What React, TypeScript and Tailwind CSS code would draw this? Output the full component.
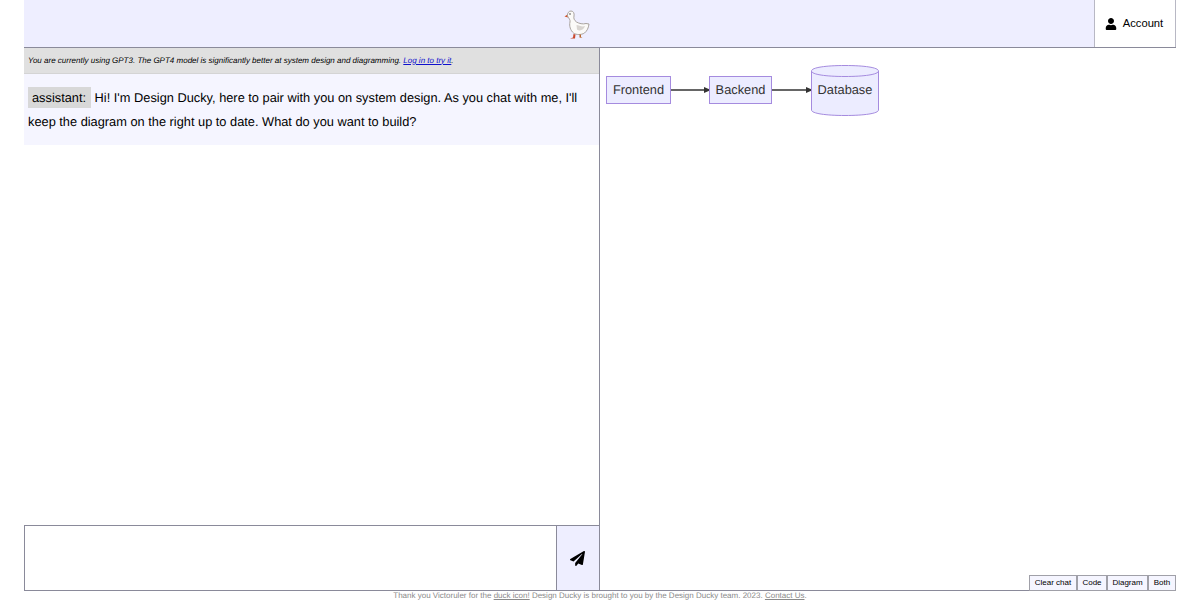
import { FaPaperPlane, FaUser } from 'react-icons/fa';

function DuckLogo() {
  return (
    <svg width="26" height="30" viewBox="0 0 26 30" aria-label="Design Ducky">
      <path d="M3.5 4.5 L0.5 6.5 L4 7.5 Z" fill="#d2552a" />
      <path
        d="M3.5 6 C3 3 5 1 7 1 C9.5 1 10.5 3.5 10 6 C9.5 8.5 10 10 12.5 12 C15 13.5 19 14.5 22 13.5 L25 14 C24.5 18 23 21 20.5 23 C17.5 25 12 25 9.5 23 C6.5 20.5 5 16 6 12 C6.5 10 5 8.5 3.5 6 Z"
        fill="#fbfaf8"
        stroke="#a09a94"
        strokeWidth="0.9"
      />
      <path d="M12.5 15 C15 15 18 17.5 21 16 C20 20 15.5 21.5 13 19.5 Z" fill="#d8d4d0" />
      <circle cx="6" cy="4" r="0.8" fill="#444" />
      <path d="M9.5 24 L9 27.5 L6 28.5 L11 28.5 L11.5 24.5 Z" fill="#c9482b" />
      <path d="M15.5 24.5 L15.5 27.5 L18.5 28 L17 27 L17 24.5 Z" fill="#b8662c" />
    </svg>
  );
}

function FlowDiagram() {
  const label = 'fill-[#333333] text-[12.8px] [font-family:"Liberation_Sans",Arial,sans-serif]';
  return (
    <svg width="290" height="70" viewBox="0 0 290 70" className="ml-[1px] mt-[10px]">
      <rect x="5.5" y="18.5" width="64" height="27" fill="#ececff" stroke="#a58bdf" />
      <text x="37.5" y="36" textAnchor="middle" className={label}>Frontend</text>
      <path d="M70 32 H103" stroke="#333" strokeWidth="1.5" />
      <path d="M103 29 L110 32 L103 35 Z" fill="#333" />
      <rect x="108.5" y="18.5" width="62" height="27" fill="#ececff" stroke="#a58bdf" />
      <text x="139.5" y="36" textAnchor="middle" className={label}>Backend</text>
      <path d="M171 32 H205" stroke="#333" strokeWidth="1.5" />
      <path d="M205 29 L212 32 L205 35 Z" fill="#333" />
      <path
        d="M210.5 13 C210.5 9.5 225 7.5 244 7.5 C263 7.5 277.5 9.5 277.5 13 V52 C277.5 55.5 263 57.5 244 57.5 C225 57.5 210.5 55.5 210.5 52 Z"
        fill="#ececff"
        stroke="#a58bdf"
      />
      <path d="M210.5 13 C210.5 16.5 225 18.5 244 18.5 C263 18.5 277.5 16.5 277.5 13" fill="none" stroke="#a58bdf" />
      <text x="244" y="36" textAnchor="middle" className={label}>Database</text>
    </svg>
  );
}

const BUTTONS = [
  { name: 'Clear chat', width: 'w-[48px]' },
  { name: 'Code', width: 'w-[30px]' },
  { name: 'Diagram', width: 'w-[41px]' },
  { name: 'Both', width: 'w-[28px]' },
];

export default function App() {
  return (
    <div className='flex h-[600px] flex-col overflow-hidden bg-white px-6 font-["Liberation_Sans",Arial,sans-serif] text-black [text-rendering:geometricPrecision]'>
      <header className="flex h-[48px] shrink-0 border-b border-[#8a8a9a] bg-[#eeeeff]">
        <div className="flex flex-1 items-center justify-center pl-[36px] pt-[3px]">
          <DuckLogo />
        </div>
        <button className="flex w-[82px] items-center justify-center gap-[6px] border-x border-[#b8b8c4] bg-white pr-[2px] text-[11.2px]">
          <FaUser className="text-[12px]" />
          Account
        </button>
      </header>

      <main className="relative flex min-h-0 flex-1 border-b border-[#8a8a9a]">
        <section className="flex w-[576px] flex-col border-r border-[#8a8a9a]">
          <div className="flex h-[26px] shrink-0 items-center border-b border-[#d4d4d4] bg-[#e0e0e0] pl-1 text-[8px] italic">
            <span>
              You are currently using GPT3. The GPT4 model is significantly better at system design and diagramming.{' '}
              <a href="#" className="text-[#1010cc] underline">Log in to try it</a>.
            </span>
          </div>
          <div className="h-[71px] shrink-0 bg-[#f5f5ff] px-1 pt-[12px] text-[12.8px] leading-[24px]">
            <span className="bg-[#d8d8d8] py-[3px] pr-[5px] pl-[4px]">assistant:</span> Hi! I'm Design Ducky, here to pair with you on system design. As you chat with me, I'll keep the diagram on the right up to date. What do you want to build?
          </div>
          <div className="flex-1" />
          <div className="flex h-[65px] shrink-0 border-t border-l border-[#8a8a9a]">
            <textarea className="min-w-0 flex-1 resize-none bg-white outline-none" />
            <button className="flex w-[43px] items-center justify-center border-l border-[#8a8a9a] bg-[#eeeeff] pr-[2px]">
              <FaPaperPlane className="text-[15px]" />
            </button>
          </div>
        </section>

        <section className="min-w-0 flex-1">
          <FlowDiagram />
        </section>

        <div className="absolute right-0 bottom-[-1px] flex">
          {BUTTONS.map((b) => (
            <button
              key={b.name}
              className={`h-[16px] border border-[#a0a0a8] bg-[#f5f5ff] text-[8px] leading-none ${b.width}`}
            >
              {b.name}
            </button>
          ))}
        </div>
      </main>

      <footer className="h-[9px] text-center text-[8px] leading-[9px] text-[#8a8a8a]">
        Thank you Victoruler for the <a href="#" className="underline">duck icon!</a> Design Ducky is brought to you by the Design Ducky team. 2023. <a href="#" className="underline">Contact Us</a>.
      </footer>
    </div>
  );
}
